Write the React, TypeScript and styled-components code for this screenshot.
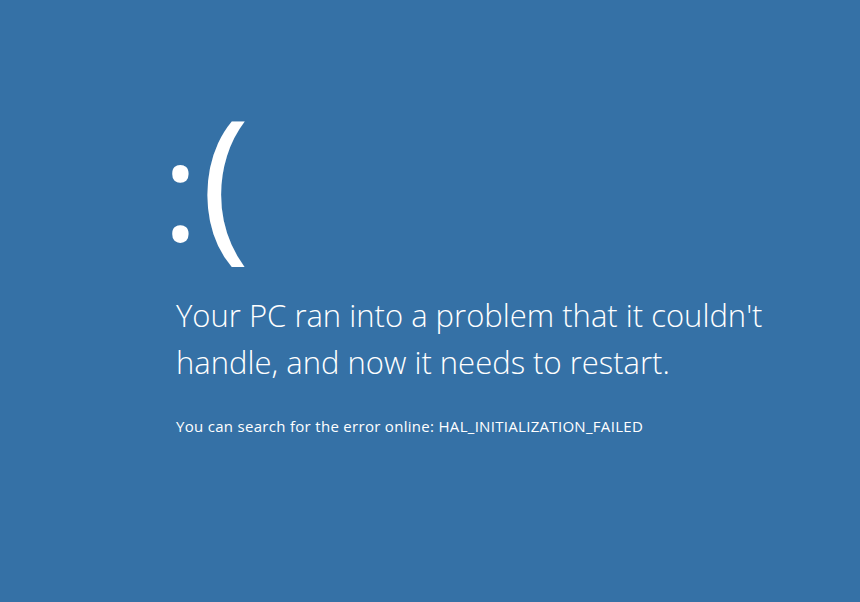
import React from "react";
import styled, { createGlobalStyle } from "styled-components";

const Global = createGlobalStyle`
  html, body { margin: 0; padding: 0; background: #3571a6; }
  body { font-family: "Open Sans", "Noto Sans", sans-serif; }
`;

const Screen = styled.div`
  width: 860px;
  height: 602px;
  background: #3571a6;
  color: #ffffff;
  box-sizing: border-box;
  padding: 64px 0 0 176px;
  display: flex;
  flex-direction: column;
  overflow: hidden;
`;

const Face = styled.div`
  font-family: "Open Sans", sans-serif;
  font-weight: 400;
  font-size: 166px;
  line-height: 226px;
  height: 226px;
  margin-left: -14px;
  white-space: nowrap;
`;

const Eyes = styled.span`
  font-size: 140px;
  margin-left: 0px;
  margin-right: 2px;
`;

const Message = styled.p`
  margin: 2px 0 0 0;
  font-weight: 300;
  font-size: 31px;
  line-height: 47px;
`;

const Hint = styled.p`
  margin: 30px 0 0 0;
  font-weight: 400;
  font-size: 15px;
  line-height: 20px;
  letter-spacing: 0.3px;
`;

export default function App() {
  return (
    <>
      <Global />
      <Screen>
        <Face>
          <Eyes>:</Eyes>(
        </Face>
        <Message>
          Your PC ran into a problem that it couldn't
          <br />
          handle, and now it needs to restart.
        </Message>
        <Hint>You can search for the error online: HAL_INITIALIZATION_FAILED</Hint>
      </Screen>
    </>
  );
}
